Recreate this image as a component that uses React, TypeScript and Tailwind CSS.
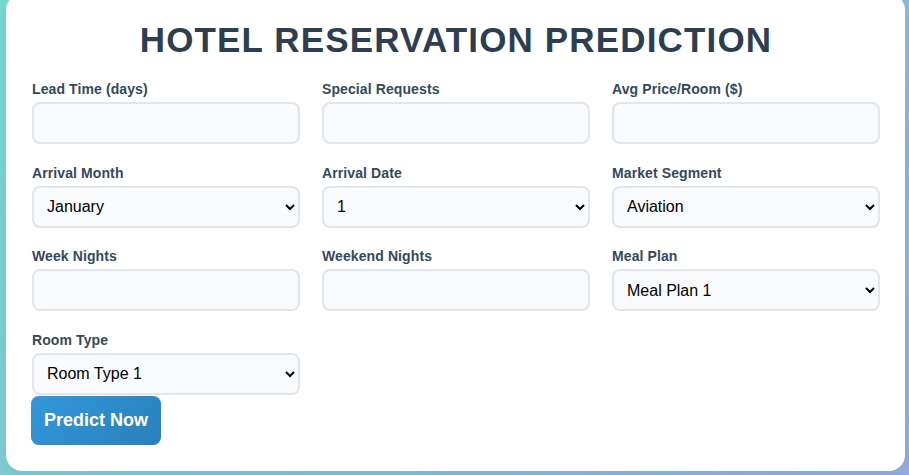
const fields = [
  { label: 'Lead Time (days)', type: 'input' },
  { label: 'Special Requests', type: 'input' },
  { label: 'Avg Price/Room ($)', type: 'input' },
  { label: 'Arrival Month', type: 'select', options: ['January', 'February', 'March', 'April', 'May', 'June', 'July', 'August', 'September', 'October', 'November', 'December'] },
  { label: 'Arrival Date', type: 'select', options: Array.from({ length: 31 }, (_, i) => String(i + 1)) },
  { label: 'Market Segment', type: 'select', options: ['Aviation', 'Complementary', 'Corporate', 'Offline', 'Online'] },
  { label: 'Week Nights', type: 'input' },
  { label: 'Weekend Nights', type: 'input' },
  { label: 'Meal Plan', type: 'select', options: ['Meal Plan 1', 'Meal Plan 2', 'Meal Plan 3', 'Not Selected'] },
  { label: 'Room Type', type: 'select', options: ['Room Type 1', 'Room Type 2', 'Room Type 3', 'Room Type 4', 'Room Type 5', 'Room Type 6', 'Room Type 7'] },
];

const boxClass =
  'w-full h-[42px] rounded-lg border-2 border-[#e0e6ec] bg-[#f8fafc] text-[16px] text-black outline-none';

export default function App() {
  return (
    <div
      className="h-[475px] overflow-hidden bg-[linear-gradient(135deg,#76dcd0,#95aedb)]"
      style={{ fontFamily: '"Liberation Sans", Arial, sans-serif' }}
    >
      <div className="ml-[6px] -mt-[6px] w-[899px] rounded-2xl bg-white pl-[26px] pr-[25px] pt-[26px] pb-[26px] shadow-[0_4px_20px_rgba(0,0,0,0.08)]">
        <h1 className="text-center text-[35px] font-bold leading-[40px] tracking-[1.15px] text-[#2c3e50]">
          HOTEL RESERVATION PREDICTION
        </h1>

        <form className="mt-[21px]" onSubmit={(e) => e.preventDefault()}>
          <div className="grid grid-cols-3 gap-x-[22px] gap-y-[20.5px]">
            {fields.map((f) => (
              <div key={f.label} className="flex flex-col">
                <label className="mb-[5px] text-[14px] font-bold leading-[16px] tracking-[0.1px] text-[#34495e]">{f.label}</label>
                {f.type === 'input' ? (
                  <input type="number" className={`${boxClass} px-[12px]`} />
                ) : (
                  <select className={`${boxClass} pl-[9px] pr-[4px]`}>
                    {f.options!.map((o) => (
                      <option key={o}>{o}</option>
                    ))}
                  </select>
                )}
              </div>
            ))}
          </div>

          <button
            type="submit"
            className="mt-[1px] -ml-[1px] h-[49px] rounded-lg bg-[linear-gradient(135deg,#3498db,#2980b9)] px-[13px] text-[18px] font-bold text-white"
          >
            Predict Now
          </button>
        </form>
      </div>
    </div>
  );
}
